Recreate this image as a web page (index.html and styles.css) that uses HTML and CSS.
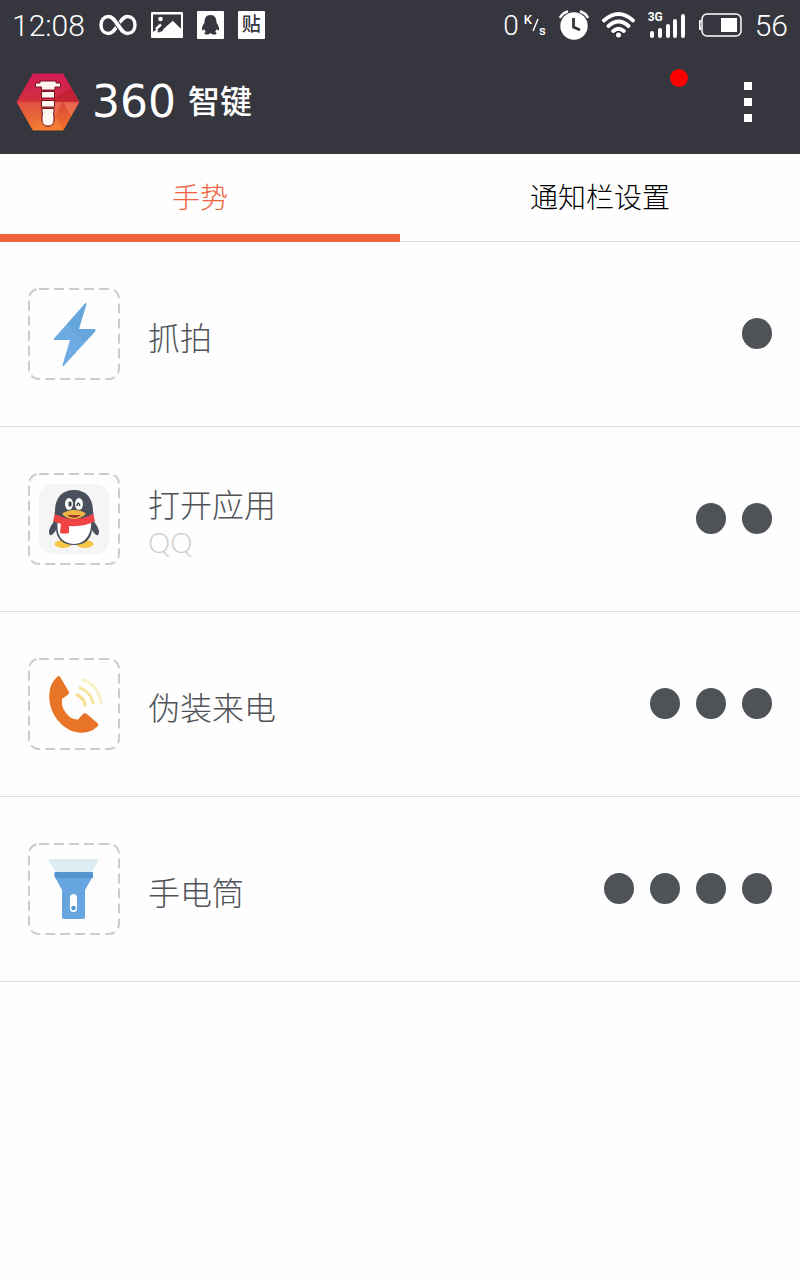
FILE: index.html
```html
<!DOCTYPE html>
<html lang="zh-CN">
<head>
  <meta charset="UTF-8" />
  <meta name="viewport" content="width=device-width, initial-scale=1.0"/>
  <title>360智键</title>
  <link rel="stylesheet" href="styles.css">
</head>
<body>
  <div class="status-bar">
    <div class="status-group">
      <span class="clock">12:08</span>
      <svg width="38" height="22" viewBox="0 0 38 22" fill="none" stroke="#fff" stroke-width="3.4">
        <path d="M19 11C15 5 13 2.500 9.500 2.500C5 2.500 2 6 2 11S5 19.500 9.500 19.500C13 19.500 15 17 19 11C23 5 25 2.500 28.500 2.500C33 2.500 36 6 36 11S33 19.500 28.500 19.500C25 19.500 23 17 19 11"/>
        <path d="M16.500 11.500L21 18M17 4L21.500 10.500" stroke="#35363e" stroke-width="1.200"/>
        <path d="M14 4.500C15.500 6 17 8 19 11S22.500 16.500 24 17.800"/>
      </svg>
      <svg width="32" height="26" viewBox="0 0 32 26">
        <rect width="32" height="26" rx="1" fill="#fff"/>
        <path d="M2 2.500H30V17L21.500 9L13 16.500L11.500 20H9L7 19L2 21Z" fill="#35363e"/>
        <circle cx="9.500" cy="7" r="2.300" fill="#fff"/>
        <path d="M5 17L10 12.500" stroke="#fff" stroke-width="2.500"/>
        <path d="M2 20L6 17L10 20L22 9L31 18V24H2Z" fill="#fff"/>
        <path d="M7 20L12 15" stroke="#35363e" stroke-width="2"/>
      </svg>
      <svg width="27" height="28" viewBox="0 0 27 28">
        <rect width="27" height="28" rx="1" fill="#fff"/>
        <path d="M13.500 4C9 4 7.500 7.500 7.500 11.500C6 14 4.500 16.500 5 19C5.500 20 6.500 19 7.300 18C7.500 19.500 8.500 20.500 9 21C7 21.500 7 23.500 9 23.500C11 23.500 12.500 23 13.500 22C14.500 23 16 23.500 18 23.500C20 23.500 20 21.500 18 21C19 20 19.500 19 19.700 18C20.500 19 21.500 20 22 19C22.500 16.500 21 14 19.500 11.500C19.500 7.500 18 4 13.500 4Z" fill="#35363e"/>
      </svg>
      <span class="tieba">贴</span>
    </div>
    <div class="status-group status-right">
      <span class="speed">0</span>
      <span class="unit"><span class="unit-top">K</span><svg width="7" height="14" viewBox="0 0 7 14"><path d="M6 1L1 13" stroke="#fff" stroke-width="1.500"/></svg><span class="unit-bottom">s</span></span>
      <svg width="30" height="30" viewBox="0 0 30 30">
        <circle cx="15" cy="16" r="13.700" fill="#fff"/>
        <path d="M1.500 7Q3.500 3 8 1.700M28.500 7Q26.500 3 22 1.700" fill="none" stroke="#fff" stroke-width="2.600" stroke-linecap="round"/>
        <path d="M14.500 8V17L21 20" fill="none" stroke="#35363e" stroke-width="2.800"/>
      </svg>
      <svg width="33" height="26" viewBox="0 0 33 26" fill="none" stroke="#fff" stroke-width="3.800" stroke-linecap="round">
        <path d="M2 8.500Q16.500 -4.500 31 8.500M6.500 14Q16.500 5 26.500 14M11.200 19Q16.500 14.500 21.800 19"/>
        <circle cx="16.500" cy="23" r="2.500" fill="#fff" stroke="none"/>
      </svg>
      <span class="signal">
        <span class="network">3G</span>
        <svg width="36" height="28" viewBox="0 0 36 28" fill="#fff">
          <rect x="0" y="20" width="4" height="7" rx="2"/>
          <rect x="8" y="17" width="4" height="10" rx="2"/>
          <rect x="16" y="13" width="4" height="14" rx="2"/>
          <rect x="23" y="8" width="4" height="19" rx="2"/>
          <rect x="31" y="3" width="4" height="24" rx="2"/>
        </svg>
      </span>
      <svg width="43" height="24" viewBox="0 0 43 24">
        <rect x="3" y="1" width="39" height="22" rx="5" fill="none" stroke="#fff" stroke-width="1.500"/>
        <path d="M1.500 7Q-.5 12 1.500 17" fill="none" stroke="#fff" stroke-width="2"/>
        <rect x="22" y="5" width="16" height="14" fill="#fff"/>
      </svg>
      <span class="battery">56</span>
    </div>
  </div>

  <header class="app-bar">
    <svg width="64" height="58" viewBox="0 0 64 58">
      <defs>
        <linearGradient id="hex" x1="0" y1="0" x2="0" y2="1">
          <stop offset="0" stop-color="#d31b58"/>
          <stop offset=".45" stop-color="#d22e3e"/>
          <stop offset=".55" stop-color="#de4a38"/>
          <stop offset="1" stop-color="#ef7228"/>
        </linearGradient>
      </defs>
      <path d="M17 1H47L63 29L47 57H17L1 29Z" fill="url(#hex)" stroke="url(#hex)" stroke-width="1" stroke-linejoin="round"/>
      <path d="M32 29L55 15L63 29Z" fill="#a90d1d" opacity=".35"/>
      <path d="M1 29H32L17 57Z" fill="#ff9a70" opacity=".15"/>
      <path d="M32 29H63L55 43L47 29L39 43Z" fill="#ffad80" opacity=".3"/>
      <path d="M17 57L24 43L32 57L40 43L47 57Z" fill="#ff9b4b" opacity=".3"/>
      <g fill="#fff7f0" stroke="#76121c" stroke-width="1">
        <path d="M24 8H40V10H44.500V14H39V17H25.500V14H19.500V10H24Z"/>
        <rect x="25.500" y="18.500" width="13" height="6.500"/>
        <rect x="25.500" y="27.500" width="13" height="6.500"/>
        <path d="M26 35.500H38V39Q37 41 38 43V47Q38 53 32 53Q26 53 26 47V43Q27 41 26 39Z"/>
      </g>
    </svg>
    <h1 class="brand"><span class="brand-number">360</span>智键</h1>
    <button class="menu-button" type="button" aria-label="菜单">
      <span class="menu-square"></span>
      <span class="menu-square"></span>
      <span class="menu-square"></span>
      <span class="badge"></span>
    </button>
  </header>

  <nav class="tabs">
    <button class="tab active" type="button">手势</button>
    <button class="tab" type="button">通知栏设置</button>
  </nav>

  <ul class="gestures">
    <li class="gesture">
      <div class="gesture-icon">
        <svg class="icon" viewBox="0 0 92 92">
          <rect class="dashes" x="1" y="1" width="90" height="90" rx="10"/>
          <path d="M57.500 15L26 50.500Q25 52 27 52H42L34.500 77Q34.500 79 36 77.500L67.500 43Q68 41 66 41H51L58.500 16Q58.500 14 57.500 15Z" fill="#6dabe2"/>
          <path d="M58 15L39 36L57 55L67.500 43Q68 41 66 41H51Z" fill="#5794d0" opacity=".25"/>
        </svg>
      </div>
      <div class="gesture-text"><span class="gesture-title">抓拍</span></div>
      <div class="dots"><span class="dot"></span></div>
    </li>
    <li class="gesture">
      <div class="gesture-icon">
        <svg class="icon" viewBox="0 0 92 92">
          <rect class="dashes" x="1" y="1" width="90" height="90" rx="10"/>
          <rect x="11" y="11" width="70" height="70" rx="14" fill="#f5f5f5"/>
          <ellipse cx="35" cy="71" rx="8.500" ry="4" fill="#f5c647"/>
          <ellipse cx="57" cy="71" rx="8.500" ry="4" fill="#f5c647"/>
          <path d="M46 17C34 17 27 25 27 38C26 43 27 47 25 50C21 55 20 60 22 62C24 63 26 60 28 57C29 66 35 72 46 72C57 72 63 66 64 57C66 60 68 63 70 62C72 60 71 55 67 50C65 47 66 43 65 38C65 25 58 17 46 17Z" fill="#4a505b"/>
          <path d="M30 47Q46 56 63 47Q64 56 60 63Q55 71 46 71Q37 71 32 64Q28 56 30 47Z" fill="#fff"/>
          <path d="M27 41Q46 51 65 41L67 48Q58 54 41 53V60Q36 61 32 60L33 51Q27 49 25 48Z" fill="#f04444"/>
          <ellipse cx="41" cy="31" rx="4" ry="6" fill="#fff"/>
          <ellipse cx="51" cy="31" rx="4" ry="6" fill="#fff"/>
          <ellipse cx="42" cy="31" rx="1.700" ry="2.800" fill="#3c424c"/>
          <path d="M49 33Q50 27 52 33" fill="none" stroke="#3c424c" stroke-width="1.500"/>
          <path d="M34 41Q39 37 46 37Q54 37 58 41Q52 46 46 46Q39 46 34 41Z" fill="#f2b844"/>
          <path d="M39 42H53Q50 45 46 45Q42 45 39 42Z" fill="#983a24"/>
        </svg>
      </div>
      <div class="gesture-text">
        <span class="gesture-title">打开应用</span>
        <span class="gesture-subtitle">QQ</span>
      </div>
      <div class="dots"><span class="dot"></span><span class="dot"></span></div>
    </li>
    <li class="gesture">
      <div class="gesture-icon">
        <svg class="icon" viewBox="0 0 92 92">
          <rect class="dashes" x="1" y="1" width="90" height="90" rx="10"/>
          <path d="M29 19Q31 17 32.500 19.500L41 34Q41.500 35.500 40 36.500L34 41Q33 49 38 55Q43 62 50 61.500L55 56Q57 54.500 59 56L70 65.500Q71 67 69.500 68.500C65 73 58 75.500 51 74.500C34 73 19 54 21.500 34Q22.500 25 29 19Z" fill="#e87527"/>
          <g fill="none" stroke-width="3" stroke-linecap="round">
            <path d="M49 37Q56 40 57 47" stroke="#f5df8d"/>
            <path d="M52 30Q63 34 65 45" stroke="#f5e6a0"/>
            <path d="M55 22Q70 27 73 44" stroke="#f8f2c8"/>
          </g>
        </svg>
      </div>
      <div class="gesture-text"><span class="gesture-title">伪装来电</span></div>
      <div class="dots"><span class="dot"></span><span class="dot"></span><span class="dot"></span></div>
    </li>
    <li class="gesture">
      <div class="gesture-icon">
        <svg class="icon" viewBox="0 0 92 92">
          <rect class="dashes" x="1" y="1" width="90" height="90" rx="10"/>
          <path d="M22 16H69Q71 16 70 18L64 29H28L21 18Q20 16 22 16Z" fill="#dceef3"/>
          <path d="M27 29H64Q65 29 65 31V33L57 47V74Q57 76 55 76H36Q34 76 34 74V47L27 34Q26 30 27 29Z" fill="#67a5e0"/>
          <path d="M27 29H64Q65 29 65 31V35H27Q26 30 27 29Z" fill="#5595d0"/>
          <rect x="42" y="51" width="7" height="18" rx="3.500" fill="#fff"/>
          <circle cx="45.500" cy="65" r="2.300" fill="#5595d0"/>
        </svg>
      </div>
      <div class="gesture-text"><span class="gesture-title">手电筒</span></div>
      <div class="dots"><span class="dot"></span><span class="dot"></span><span class="dot"></span><span class="dot"></span></div>
    </li>
  </ul>
</body>
</html>
```
FILE: styles.css
```css
* {
  box-sizing: border-box;
}

body {
  font-family: Roboto, "Noto Sans CJK SC", sans-serif;
  font-weight: 300;
  background: #fefefe;
  color: #4f5358;
  margin: 0;
}

svg {
  display: block;
  flex-shrink: 0;
}

button {
  font-family: inherit;
  font-weight: inherit;
  border: none;
  background: none;
  cursor: pointer;
}

/* status bar */
.status-bar {
  display: flex;
  justify-content: space-between;
  align-items: center;
  height: 50px;
  padding: 0 12px;
  background: #35363e;
  color: #fff;
}

.status-group {
  display: flex;
  align-items: center;
  gap: 14px;
}

.status-right {
  gap: 13px;
}

.clock,
.battery {
  font-size: 30px;
  line-height: 48px;
  padding-top: 2px;
}

.tieba {
  width: 27px;
  height: 28px;
  border-radius: 1px;
  background: #fff;
  color: #35363e;
  font-size: 19px;
  font-weight: 500;
  line-height: 27px;
  text-align: center;
}

.speed {
  font-size: 28px;
}

.unit {
  display: flex;
  align-items: center;
  margin-left: -8px;
  font-size: 13px;
  font-weight: 500;
}

.unit-top {
  padding-bottom: 12px;
}

.unit-bottom {
  padding-top: 10px;
}

.signal {
  position: relative;
  padding-left: 2px;
}

.network {
  position: absolute;
  top: 0;
  left: 0;
  font-size: 12px;
  font-weight: 700;
  line-height: 12px;
}

/* app bar */
.app-bar {
  display: flex;
  align-items: center;
  height: 104px;
  padding: 0 28px 0 16px;
  background: #35363e;
}

.brand {
  display: flex;
  align-items: center;
  flex: 1;
  margin: 0 0 0 12px;
  color: #fff;
  font-size: 32px;
  font-weight: 500;
  line-height: 40px;
}

.brand-number {
  font-family: "DejaVu Sans", sans-serif;
  font-size: 44px;
  font-weight: 400;
  margin-right: 12px;
}

.menu-button {
  position: relative;
  display: flex;
  flex-direction: column;
  align-items: center;
  gap: 8px;
  width: 48px;
  padding: 8px 0;
}

.menu-square {
  width: 8px;
  height: 8px;
  background: #fff;
}

.badge {
  position: absolute;
  top: -5px;
  left: -54px;
  width: 18px;
  height: 18px;
  border-radius: 50%;
  background: #f00;
}

/* tabs */
.tabs {
  display: flex;
  height: 88px;
}

.tab {
  flex: 1;
  padding: 0 0 4px;
  border-bottom: 1px solid #ddd;
  color: #000;
  font-size: 28px;
}

.tab.active {
  padding: 3px 0 0;
  border-bottom: 8px solid #f1633f;
  color: #f1633f;
}

/* gesture list */
.gestures {
  list-style: none;
  margin: 0;
  padding: 0;
}

.gesture {
  display: flex;
  align-items: center;
  min-height: 185px;
  padding: 0 28px;
  border-bottom: 1px solid #ddd;
}

.icon {
  width: 92px;
  height: 92px;
}

.dashes {
  fill: none;
  stroke: #ccc;
  stroke-width: 2;
  stroke-dasharray: 10 5;
}

.gesture-text {
  display: flex;
  flex-direction: column;
  flex: 1;
  margin-left: 28px;
  padding-top: 10px;
}

.gesture-title {
  font-size: 32px;
  line-height: 40px;
}

.gesture-subtitle {
  margin-bottom: 4px;
  color: #ccc;
  font-family: Lato, sans-serif;
  font-size: 28px;
  line-height: 32px;
}

.dots {
  display: flex;
  gap: 16px;
  padding-bottom: 2px;
}

.dot {
  width: 30px;
  height: 31px;
  border-radius: 50%;
  background: #4f5358;
}
```
